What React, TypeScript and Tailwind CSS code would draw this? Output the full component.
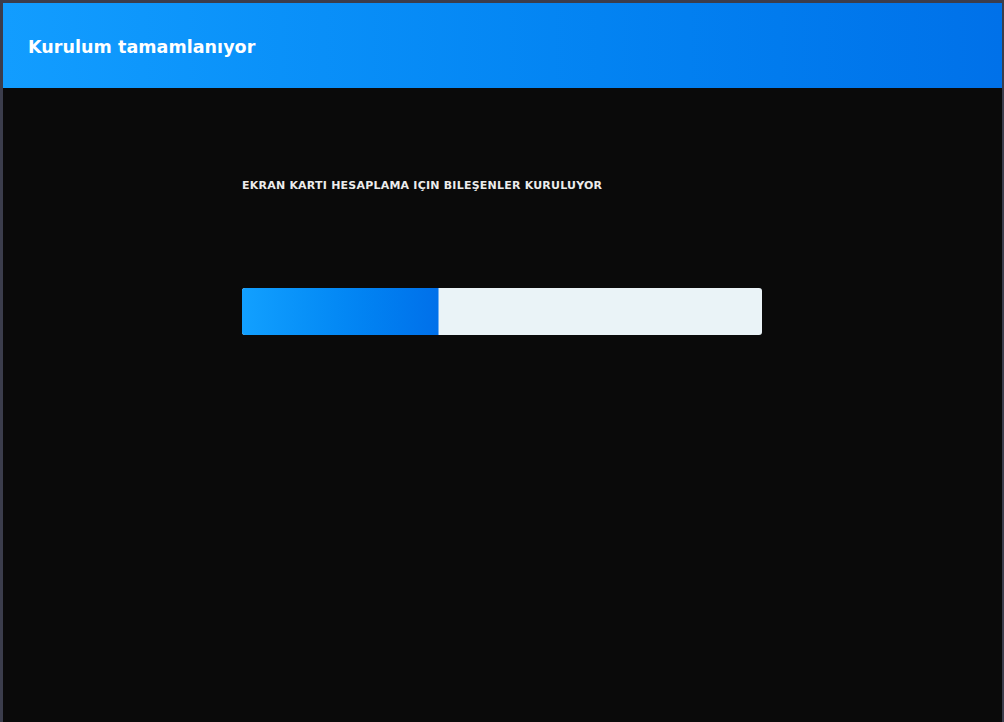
export default function App() {
  const progress = 37.7;
  const font = '"DejaVu Sans", "Noto Sans", sans-serif';

  return (
    <div className="h-[722px] w-[1004px] bg-[#3b3d4c] pt-[3px] pl-[3px] pr-[2px] overflow-hidden">
      <div className="flex h-full flex-col bg-[#0a0a0a]" style={{ fontFamily: font }}>
        {/* header */}
        <div className="flex h-[85px] shrink-0 items-center bg-gradient-to-r from-[#129dff] to-[#0071e9] pl-[25px] pt-[3px]">
          <h1 className="text-[17.5px] font-bold tracking-[0.05px] text-white">Kurulum tamamlanıyor</h1>
        </div>

        {/* body */}
        <div className="flex flex-col pl-[239px] pt-[90px]">
          <p className="text-[11px] font-bold uppercase tracking-[0.22px] text-[#ececec]">
            EKRAN KARTI HESAPLAMA IÇIN BILEŞENLER KURULUYOR
          </p>
          <div className="mt-[93px] flex h-[47px] w-[520px] overflow-hidden rounded-[3px] bg-[#eaf3f7]">
            <div
              className="h-full border-r border-[#6fb0f5] bg-gradient-to-r from-[#12a0ff] to-[#0070ea]"
              style={{ width: `${progress + 0.2}%` }}
            />
          </div>
        </div>
      </div>
    </div>
  );
}
